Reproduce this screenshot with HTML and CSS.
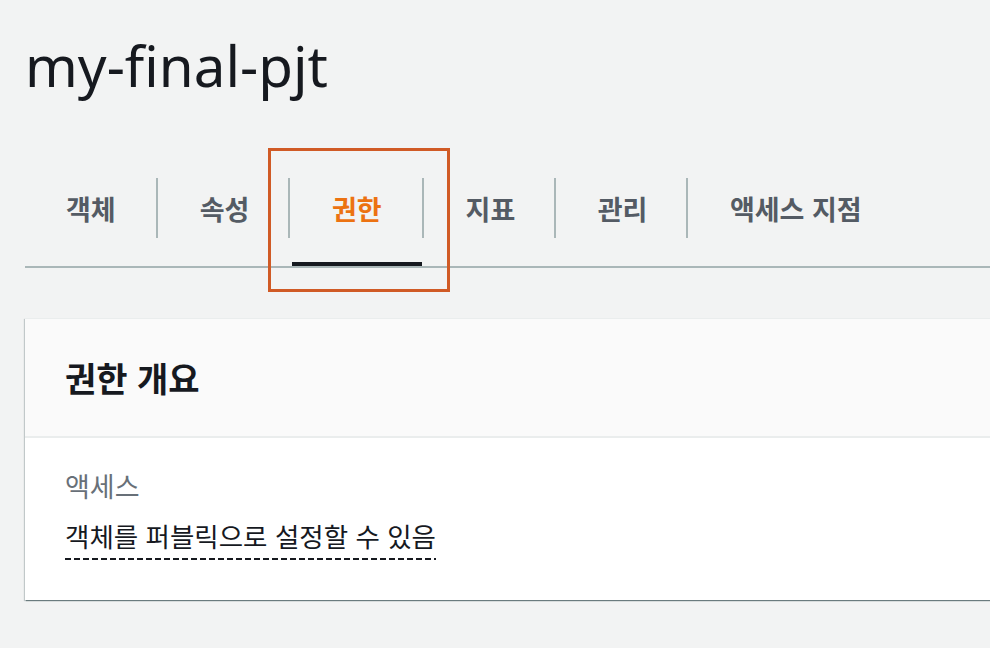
FILE: index.html
```html
<!DOCTYPE html>
<html lang="ko">
<head>
<meta charset="utf-8">
<title>my-final-pjt</title>
<link rel="stylesheet" href="styles.css">
</head>
<body>
<div class="page">
  <h1 class="title">my-final-pjt</h1>
  <nav class="tabs">
    <div class="tab"><span class="tab-label">객체</span></div>
    <div class="tab"><span class="tab-label">속성</span></div>
    <div class="tab active"><span class="tab-label">권한</span></div>
    <div class="tab"><span class="tab-label">지표</span></div>
    <div class="tab"><span class="tab-label">관리</span></div>
    <div class="tab"><span class="tab-label">액세스 지점</span></div>
    <div class="highlight"></div>
  </nav>
  <section class="card">
    <header class="card-header">
      <h2 class="card-title">권한 개요</h2>
    </header>
    <div class="card-body">
      <div class="field-label">액세스</div>
      <div class="field-value"><span class="dashed">객체를 퍼블릭으로 설정할 수 있음</span></div>
    </div>
  </section>
</div>
</body>
</html>
```
FILE: styles.css
```css
html, body {
  margin: 0;
  padding: 0;
  background: #f2f3f3;
  overflow: hidden;
}
body {
  width: 990px;
  height: 648px;
  font-family: "Noto Sans", "Noto Sans CJK KR", sans-serif;
  color: #16191f;
}
.page {
  padding: 0 0 0 25px;
}
.title {
  margin: 0;
  padding-top: 29px;
  font-family: "Noto Sans", sans-serif;
  font-weight: 400;
  font-size: 56.5px;
  line-height: 74px;
  letter-spacing: 0;
  color: #16191f;
}
.tabs {
  position: relative;
  display: flex;
  margin-top: 75px;
  border-bottom: 2px solid #aab7b8;
}
.tab {
  display: flex;
  flex-direction: column;
}
.tab-label {
  display: flex;
  align-items: center;
  height: 60px;
  padding: 0 38.5px 0 42px;
  border-left: 2px solid #aab7b8;
  font-family: "Noto Sans CJK KR", sans-serif;
  font-weight: 700;
  font-size: 27px;
  color: #545b64;
  white-space: nowrap;
}
.tab:first-child .tab-label {
  border-left: none;
  padding-left: 41px;
  padding-right: 40px;
}
.tab.active .tab-label {
  padding-right: 40px;
}
.tab::after {
  content: "";
  display: block;
  height: 4px;
  margin-top: 24px;
  margin-left: 4px;
}
.tab.active .tab-label {
  color: #ec7211;
}
.tab.active::after {
  background: #16191f;
}
.highlight {
  position: absolute;
  left: 243px;
  top: -30px;
  width: 176px;
  height: 138px;
  border: 3px solid #d05a25;
  pointer-events: none;
}
.card {
  margin-top: 50px;
  margin-right: -20px;
  background: #ffffff;
  border-top: 1px solid #eaeded;
  box-shadow: 0 2px 1px -1px rgba(0, 28, 36, 0.45), -1px 1px 1px 0 rgba(0, 28, 36, 0.2);
}
.card-header {
  background: #fafafa;
  border-bottom: 2px solid #eaeded;
  height: 117px;
  display: flex;
  align-items: center;
  padding-left: 40px;
}
.card-title {
  margin: 0;
  font-family: "Noto Sans CJK KR", sans-serif;
  font-weight: 700;
  font-size: 34px;
  color: #16191f;
}
.card-body {
  padding: 30px 40px 0;
  height: 132px;
}
.field-label {
  font-family: "Noto Sans CJK KR", sans-serif;
  font-size: 27px;
  line-height: 36px;
  color: #687078;
}
.field-value {
  margin-top: 16px;
  font-family: "Noto Sans CJK KR", sans-serif;
  font-size: 26.5px;
  line-height: 32px;
  color: #16191f;
}
.dashed {
  padding-bottom: 5px;
  background-image: repeating-linear-gradient(to right, #16191f 0, #16191f 6px, transparent 6px, transparent 9px);
  background-size: 100% 2px;
  background-position: left bottom;
  background-repeat: no-repeat;
}
```
